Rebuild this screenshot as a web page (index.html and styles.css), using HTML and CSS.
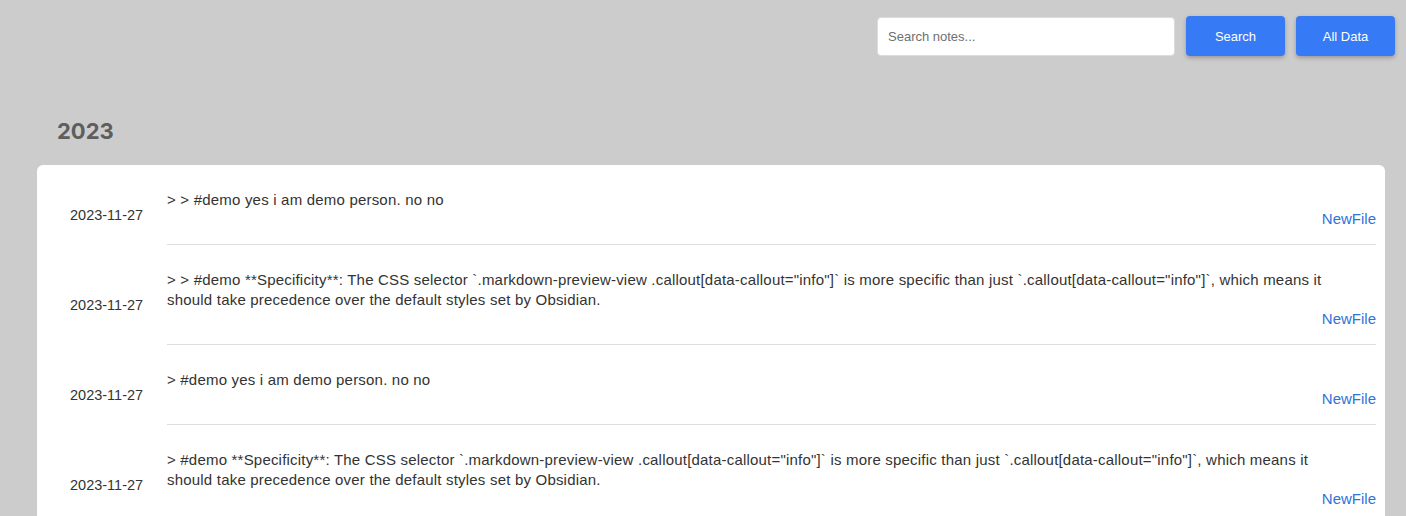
FILE: index.html
```html
<!DOCTYPE html>
<html>
<head>
<meta charset="utf-8">
<link rel="stylesheet" href="styles.css">
</head>
<body>
<div class="topbar">
  <input class="search-input" type="text" placeholder="Search notes...">
  <button class="btn">Search</button>
  <button class="btn">All Data</button>
</div>
<div class="main">
  <h2 class="year">2023</h2>
  <div class="card">
    <div class="row">
      <div class="date">2023-11-27</div>
      <div class="content">
        <div class="text">&gt; &gt; #demo yes i am demo person. no no</div>
        <div class="link-line"><a class="newfile" href="#">NewFile</a></div>
      </div>
    </div>
    <div class="row">
      <div class="date">2023-11-27</div>
      <div class="content">
        <div class="text">&gt; &gt; #demo **Specificity**: The CSS selector `.markdown-preview-view .callout[data-callout="info"]` is more specific than just `.callout[data-callout="info"]`, which means it should take precedence over the default styles set by Obsidian.</div>
        <div class="link-line"><a class="newfile" href="#">NewFile</a></div>
      </div>
    </div>
    <div class="row">
      <div class="date">2023-11-27</div>
      <div class="content">
        <div class="text">&gt; #demo yes i am demo person. no no</div>
        <div class="link-line"><a class="newfile" href="#">NewFile</a></div>
      </div>
    </div>
    <div class="row">
      <div class="date">2023-11-27</div>
      <div class="content">
        <div class="text">&gt; #demo **Specificity**: The CSS selector `.markdown-preview-view .callout[data-callout="info"]` is more specific than just `.callout[data-callout="info"]`, which means it should take precedence over the default styles set by Obsidian.</div>
        <div class="link-line"><a class="newfile" href="#">NewFile</a></div>
      </div>
    </div>
  </div>
</div>
</body>
</html>
```

FILE: styles.css
```css
html, body {
  margin: 0;
  padding: 0;
  background: #cccccc;
  font-family: "Liberation Sans", Arial, sans-serif;
  color: #333;
}

.topbar {
  display: flex;
  justify-content: flex-end;
  align-items: center;
  gap: 11px;
  padding: 16px 11px 0 0;
  height: 40px;
}

.search-input {
  box-sizing: border-box;
  width: 298px;
  height: 39px;
  border: 1px solid #dcdcdc;
  border-radius: 4px;
  padding: 0 10px;
  font-family: inherit;
  font-size: 13px;
  color: #333;
  background: #fff;
  outline: none;
}

.search-input::placeholder {
  color: #6f6f6f;
}

.btn {
  box-sizing: border-box;
  width: 99px;
  height: 40px;
  border: none;
  border-radius: 4px;
  background: #367af6;
  color: #fff;
  font-family: inherit;
  font-size: 13px;
  box-shadow: 0 2px 4px rgba(0, 0, 0, 0.25);
  cursor: pointer;
}

.main {
  padding: 0 21px 0 37px;
}

.year {
  margin: 62px 0 21px 0;
  padding-left: 20px;
  font-family: Inter, "Liberation Sans", Arial, sans-serif;
  font-size: 22px;
  line-height: 26px;
  font-weight: bold;
  color: #5e5e5e;
}

.card {
  background: #fff;
  border-radius: 6px;
  padding-right: 9px;
  min-height: 400px;
}

.row {
  display: flex;
  align-items: center;
}

.date {
  box-sizing: border-box;
  width: 130px;
  flex: 0 0 130px;
  padding: 20px 0 0 33px;
  font-size: 14.5px;
  line-height: 18px;
  color: #333;
}

.content {
  flex: 1;
  padding: 25px 0 16px 0;
  border-bottom: 1px solid #dddddd;
}

.text {
  padding-right: 30px;
  font-size: 15px;
  line-height: 20px;
  letter-spacing: 0.2px;
  color: #333;
}

.link-line {
  text-align: right;
  font-size: 15px;
  line-height: 18px;
}

.newfile {
  font-size: 15px;
  color: #2f74d8;
  text-decoration: none;
}
```
